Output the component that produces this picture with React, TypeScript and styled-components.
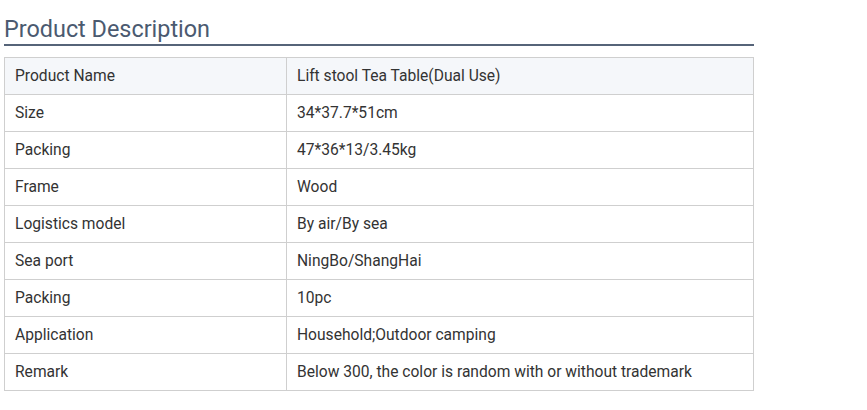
import React from "react";
import styled, { createGlobalStyle } from "styled-components";

const GlobalStyle = createGlobalStyle`
  html, body { margin: 0; padding: 0; background: #fff; }
  body { font-family: Roboto, "Liberation Sans", Arial, sans-serif; }
`;

const Page = styled.div`
  padding: 16px 0 0 4px;
  width: 750px;
`;

const Heading = styled.h2`
  margin: 0;
  font-size: 23.4px;
  font-weight: 400;
  line-height: 27px;
  color: #4b5a70;
  padding-bottom: 1px;
  border-bottom: 2px solid #566479;
`;

const Table = styled.table`
  margin-top: 11px;
  width: 750px;
  border-collapse: collapse;
  font-size: 15.6px;
  color: #333;
`;

const Row = styled.tr<{ $head?: boolean }>`
  background: ${(p) => (p.$head ? "#f5f7fa" : "#fff")};
`;

const Cell = styled.td<{ $first?: boolean }>`
  border: 1px solid #cfcfcf;
  height: 37px;
  padding: 0 10px;
  box-sizing: border-box;
  line-height: 20px;
  vertical-align: middle;
  width: ${(p) => (p.$first ? "282px" : "auto")};
`;

const rows: [string, string][] = [
  ["Product Name", "Lift stool Tea Table(Dual Use)"],
  ["Size", "34*37.7*51cm"],
  ["Packing", "47*36*13/3.45kg"],
  ["Frame", "Wood"],
  ["Logistics model", "By air/By sea"],
  ["Sea port", "NingBo/ShangHai"],
  ["Packing", "10pc"],
  ["Application", "Household;Outdoor camping"],
  ["Remark", "Below 300, the color is random with or without trademark"],
];

export default function App() {
  return (
    <Page>
      <GlobalStyle />
      <Heading>Product Description</Heading>
      <Table>
        <tbody>
          {rows.map(([k, v], i) => (
            <Row key={i} $head={i === 0}>
              <Cell $first>{k}</Cell>
              <Cell>{v}</Cell>
            </Row>
          ))}
        </tbody>
      </Table>
    </Page>
  );
}
